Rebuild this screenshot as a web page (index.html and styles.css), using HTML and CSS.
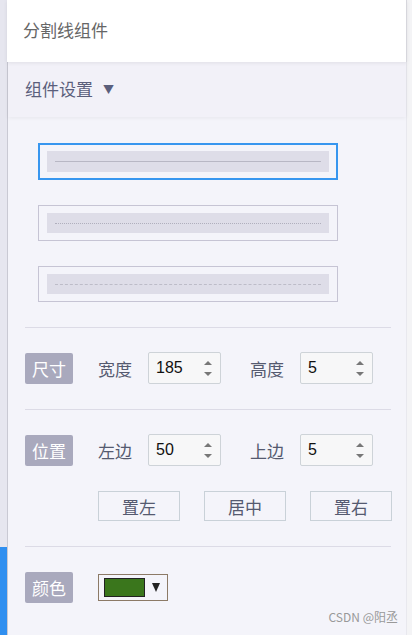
FILE: index.html
```html
<!DOCTYPE html>
<html lang="zh">
<head>
<meta charset="utf-8">
<link rel="stylesheet" href="styles.css">
</head>
<body>
<div class="app">
  <div class="rail"><div class="rail-active"></div></div>
  <div class="main">
    <div class="header">分割线组件</div>
    <div class="panel">
      <div class="section-bar">组件设置 <span class="caret">▼</span></div>
      <div class="content">
        <div class="styles">
          <div class="style-opt selected"><div class="sample"><div class="line solid"></div></div></div>
          <div class="style-opt"><div class="sample"><div class="line dotted"></div></div></div>
          <div class="style-opt"><div class="sample"><div class="line dashed"></div></div></div>
        </div>
        <div class="hr"></div>
        <div class="row">
          <span class="badge">尺寸</span>
          <span class="lbl">宽度</span>
          <div class="num"><span class="val">185</span><span class="spin"><i class="up"></i><i class="down"></i></span></div>
          <span class="lbl lbl2">高度</span>
          <div class="num"><span class="val">5</span><span class="spin"><i class="up"></i><i class="down"></i></span></div>
        </div>
        <div class="hr"></div>
        <div class="row">
          <span class="badge">位置</span>
          <span class="lbl">左边</span>
          <div class="num"><span class="val">50</span><span class="spin"><i class="up"></i><i class="down"></i></span></div>
          <span class="lbl lbl2">上边</span>
          <div class="num"><span class="val">5</span><span class="spin"><i class="up"></i><i class="down"></i></span></div>
        </div>
        <div class="btns">
          <button class="btn">置左</button>
          <button class="btn">居中</button>
          <button class="btn">置右</button>
        </div>
        <div class="hr"></div>
        <div class="row">
          <span class="badge">颜色</span>
          <div class="color"><span class="swatch"></span><span class="ctri"></span></div>
        </div>
        <div class="mark">CSDN @阳丞</div>
      </div>
    </div>
  </div>
  <div class="edge"></div>
</div>
</body>
</html>
```
FILE: styles.css
```css
* { box-sizing: border-box; }
html, body { margin: 0; padding: 0; }
body {
  width: 412px;
  height: 635px;
  overflow: hidden;
  background: #f5f5f7;
  font-family: "Noto Sans CJK SC", "Noto Sans", sans-serif;
}
.app { display: flex; height: 635px; }
.rail {
  width: 7px;
  background: #e6e6ef;
  display: flex;
  flex-direction: column;
  justify-content: flex-end;
}
.rail-active { height: 88px; background: #2f8ff0; }
.main { width: 400px; display: flex; flex-direction: column; }
.header {
  height: 62px;
  background: #fff;
  border-right: 1px solid #d6d6dc;
  padding-left: 16px;
  padding-bottom: 4px;
  display: flex;
  align-items: center;
  font-size: 17px;
  color: #666;
  position: relative;
  z-index: 2;
  box-shadow: 0 1px 4px rgba(0,0,0,0.08);
}
.panel {
  flex: 1;
  background: #f4f4fa;
  border-left: 1px solid #c9c9d3;
  border-right: 1px solid #e8e8ee;
  display: flex;
  flex-direction: column;
}
.section-bar {
  height: 55px;
  background: #f2f1f8;
  padding-left: 17px;
  padding-bottom: 2px;
  display: flex;
  align-items: center;
  font-size: 17px;
  color: #5b5f7c;
  box-shadow: 0 1px 4px rgba(0,0,0,0.06);
  position: relative;
  z-index: 1;
}
.caret { font-size: 11px; margin-left: 10px; color: #5b5f7c; }
.content {
  padding: 26px 14px 0 17px;
  display: flex;
  flex-direction: column;
  flex: 1;
}
.styles { display: flex; flex-direction: column; gap: 25px; padding-left: 13px; }
.style-opt {
  width: 300px;
  height: 36px;
  border: 1px solid #c6c4d4;
  padding: 7px 8px;
}
.style-opt.selected { border: 2px solid #3796ef; padding: 6px 7px; height: 37px; }
.sample {
  height: 100%;
  background: #dedde8;
  display: flex;
  align-items: center;
  padding: 0 8px;
}
.line { width: 100%; height: 0; }
.line.solid { border-top: 1px solid #b8b7c4; }
.line.dotted { border-top: 1px dotted #b0afbd; }
.line.dashed { border-top: 1px dashed #bdbcc8; }
.hr { height: 1px; background: #dcdbe6; margin: 25px 0; width: 366px; }
.row { display: flex; align-items: center; height: 32px; margin-top: -1px; }
.badge {
  width: 48px;
  height: 31px;
  background: #a9a9bd;
  color: #fff;
  border-radius: 2px;
  font-size: 17px;
  display: flex;
  align-items: center;
  justify-content: center;
}
.lbl { font-size: 17px; color: #555a70; margin-left: 25px; width: 50px; }
.lbl2 { margin-left: 29px; }
.num {
  width: 73px;
  height: 32px;
  border: 1px solid #ced3d8;
  border-radius: 2px;
  background: #f7f7f8;
  display: flex;
  align-items: center;
  justify-content: space-between;
  padding: 0 8px 0 7px;
}
.val { font-family: "Liberation Sans", "Noto Sans", sans-serif; font-size: 16px; color: #111; }
.spin { display: flex; flex-direction: column; gap: 7px; }
.spin i { display: block; width: 0; height: 0; border-left: 4px solid transparent; border-right: 4px solid transparent; }
.spin .up { border-bottom: 4px solid #777; }
.spin .down { border-top: 4px solid #777; }
.btns { display: flex; gap: 24px; margin-left: 73px; margin-top: 25px; }
.btn {
  width: 82px;
  height: 30px;
  border: 1px solid #c9d1d8;
  background: #f4f4fa;
  font-family: "Noto Sans CJK SC", sans-serif;
  font-size: 17px;
  color: #555a70;
  padding: 0;
  display: flex;
  align-items: center;
  justify-content: center;
}
.color {
  margin-left: 25px;
  width: 70px;
  height: 27px;
  border: 1px solid #8c7a66;
  display: flex;
  align-items: center;
  padding-left: 5px;
}
.swatch { width: 41px; height: 19px; background: #3a761c; border: 1px solid #222; }
.ctri {
  margin-left: 7px;
  width: 0; height: 0;
  border-left: 4px solid transparent;
  border-right: 4px solid transparent;
  border-top: 9px solid #222;
}
.mark {
  align-self: flex-end;
  margin-top: 5px;
  margin-right: -6px;
  font-size: 12px;
  color: #999;
}
.edge { flex: 1; background: #f4f4f6; }
```
